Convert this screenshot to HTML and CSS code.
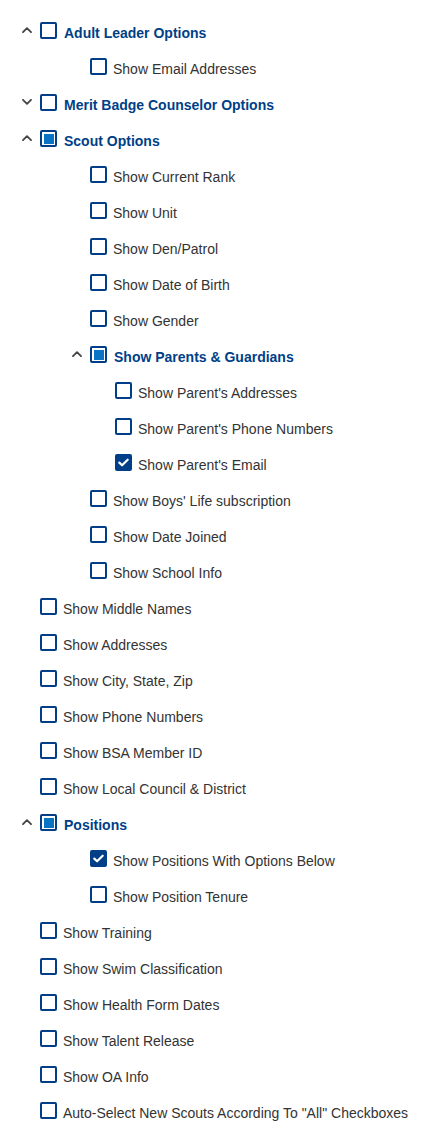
FILE: index.html
```html
<!DOCTYPE html>
<html lang="en">
<head>
<meta charset="utf-8">
<title>Options</title>
<link rel="stylesheet" href="styles.css">
</head>
<body>
<ul class="tree">
  <li class="row l0 parent"><span class="chev"><svg width="10" height="6" viewBox="0 0 10 6"><path d="M1 5.2 L5 1.2 L9 5.2" /></svg></span><span class="cb"></span><span class="label bold">Adult Leader Options</span></li>
  <li class="row l1"><span class="cb"></span><span class="label">Show Email Addresses</span></li>
  <li class="row l0 parent"><span class="chev"><svg width="10" height="6" viewBox="0 0 10 6"><path d="M1 0.8 L5 4.8 L9 0.8" /></svg></span><span class="cb"></span><span class="label bold">Merit Badge Counselor Options</span></li>
  <li class="row l0 parent"><span class="chev"><svg width="10" height="6" viewBox="0 0 10 6"><path d="M1 5.2 L5 1.2 L9 5.2" /></svg></span><span class="cb ind"><span class="fill"></span></span><span class="label bold">Scout Options</span></li>
  <li class="row l1"><span class="cb"></span><span class="label">Show Current Rank</span></li>
  <li class="row l1"><span class="cb"></span><span class="label">Show Unit</span></li>
  <li class="row l1"><span class="cb"></span><span class="label">Show Den/Patrol</span></li>
  <li class="row l1"><span class="cb"></span><span class="label">Show Date of Birth</span></li>
  <li class="row l1"><span class="cb"></span><span class="label">Show Gender</span></li>
  <li class="row l1 parent"><span class="chev"><svg width="10" height="6" viewBox="0 0 10 6"><path d="M1 5.2 L5 1.2 L9 5.2" /></svg></span><span class="cb ind"><span class="fill"></span></span><span class="label bold">Show Parents &amp; Guardians</span></li>
  <li class="row l2"><span class="cb"></span><span class="label">Show Parent's Addresses</span></li>
  <li class="row l2"><span class="cb"></span><span class="label">Show Parent's Phone Numbers</span></li>
  <li class="row l2"><span class="cb on"><svg width="13" height="13" viewBox="0 0 13 13"><path d="M2.3 6.6 L5.1 9.3 L10.7 3.7" /></svg></span><span class="label">Show Parent's Email</span></li>
  <li class="row l1"><span class="cb"></span><span class="label">Show Boys' Life subscription</span></li>
  <li class="row l1"><span class="cb"></span><span class="label">Show Date Joined</span></li>
  <li class="row l1"><span class="cb"></span><span class="label">Show School Info</span></li>
  <li class="row l0"><span class="cb"></span><span class="label">Show Middle Names</span></li>
  <li class="row l0"><span class="cb"></span><span class="label">Show Addresses</span></li>
  <li class="row l0"><span class="cb"></span><span class="label">Show City, State, Zip</span></li>
  <li class="row l0"><span class="cb"></span><span class="label">Show Phone Numbers</span></li>
  <li class="row l0"><span class="cb"></span><span class="label">Show BSA Member ID</span></li>
  <li class="row l0"><span class="cb"></span><span class="label">Show Local Council &amp; District</span></li>
  <li class="row l0 parent"><span class="chev"><svg width="10" height="6" viewBox="0 0 10 6"><path d="M1 5.2 L5 1.2 L9 5.2" /></svg></span><span class="cb ind"><span class="fill"></span></span><span class="label bold">Positions</span></li>
  <li class="row l1"><span class="cb on"><svg width="13" height="13" viewBox="0 0 13 13"><path d="M2.3 6.6 L5.1 9.3 L10.7 3.7" /></svg></span><span class="label">Show Positions With Options Below</span></li>
  <li class="row l1"><span class="cb"></span><span class="label">Show Position Tenure</span></li>
  <li class="row l0"><span class="cb"></span><span class="label">Show Training</span></li>
  <li class="row l0"><span class="cb"></span><span class="label">Show Swim Classification</span></li>
  <li class="row l0"><span class="cb"></span><span class="label">Show Health Form Dates</span></li>
  <li class="row l0"><span class="cb"></span><span class="label">Show Talent Release</span></li>
  <li class="row l0"><span class="cb"></span><span class="label">Show OA Info</span></li>
  <li class="row l0"><span class="cb"></span><span class="label">Auto-Select New Scouts According To "All" Checkboxes</span></li>
</ul>
</body>
</html>
```
FILE: styles.css
```css
html, body {
  margin: 0;
  padding: 0;
  background: #ffffff;
}
body {
  font-family: "Liberation Sans", Arial, sans-serif;
  font-size: 14px;
  color: #333333;
}
.tree {
  list-style: none;
  margin: 0;
  padding: 15px 0 0 0;
}
.row {
  display: flex;
  align-items: center;
  height: 36px;
}
.l0 { padding-left: 40px; }
.l1 { padding-left: 90px; }
.l2 { padding-left: 115px; }
.l0.parent { padding-left: 22px; }
.l1.parent { padding-left: 72px; }
.chev {
  width: 18px;
  height: 10px;
  display: flex;
  align-items: center;
  margin-top: -7px;
}
.chev svg {
  display: block;
  fill: none;
  stroke: #444444;
  stroke-width: 1.8;
  stroke-linecap: round;
  stroke-linejoin: round;
}
.cb {
  box-sizing: border-box;
  width: 17px;
  height: 17px;
  border: 2px solid #003f87;
  border-radius: 2px;
  background: #ffffff;
  display: flex;
  align-items: center;
  justify-content: center;
  flex: none;
  margin-top: -5px;
}
.cb.on {
  background: #003f87;
}
.cb.on svg {
  display: block;
  fill: none;
  stroke: #ffffff;
  stroke-width: 2.2;
  stroke-linecap: round;
  stroke-linejoin: round;
}
.cb .fill {
  width: 10px;
  height: 10px;
  background: #0a74c4;
}
.label {
  margin-left: 6px;
  line-height: 16px;
  white-space: nowrap;
}
.label.bold {
  font-weight: bold;
  color: #003f87;
  margin-left: 7px;
}
```
